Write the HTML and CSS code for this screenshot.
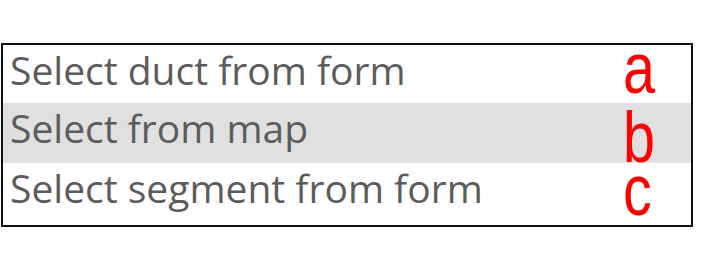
FILE: index.html
```html
<!DOCTYPE html>
<html>
<head>
<meta charset="utf-8">
<link rel="stylesheet" href="styles.css">
</head>
<body>
<div class="menu">
  <div class="item">Select duct from form</div>
  <div class="item selected">Select from map</div>
  <div class="item">Select segment from form</div>
  <span class="mark mark-a">a</span>
  <span class="mark mark-b">b</span>
  <span class="mark mark-c">c</span>
</div>
</body>
</html>
```
FILE: styles.css
```css
html, body {
  margin: 0;
  padding: 0;
  background: #fff;
}
body {
  padding-top: 43px;
  padding-left: 1px;
}
.menu {
  position: relative;
  box-sizing: border-box;
  width: 692px;
  height: 184px;
  border: 2px solid #111;
  display: grid;
  grid-template-rows: 58px 60px 1fr;
}
.item {
  font-family: "Open Sans", "Noto Sans", sans-serif;
  font-size: 39px;
  color: #5c5c5c;
  padding-left: 7px;
  line-height: 50px;
}
.item.selected {
  background: #e0e0e0;
}
.mark {
  position: absolute;
  font-family: "Liberation Sans", Arial, sans-serif;
  font-size: 72px;
  line-height: 52px;
  color: #ff0000;
  transform: scaleX(0.8);
  transform-origin: left top;
  left: 620px;
}
.mark-a { top: -3px; }
.mark-b { top: 66px; }
.mark-c { top: 119px; }
```
